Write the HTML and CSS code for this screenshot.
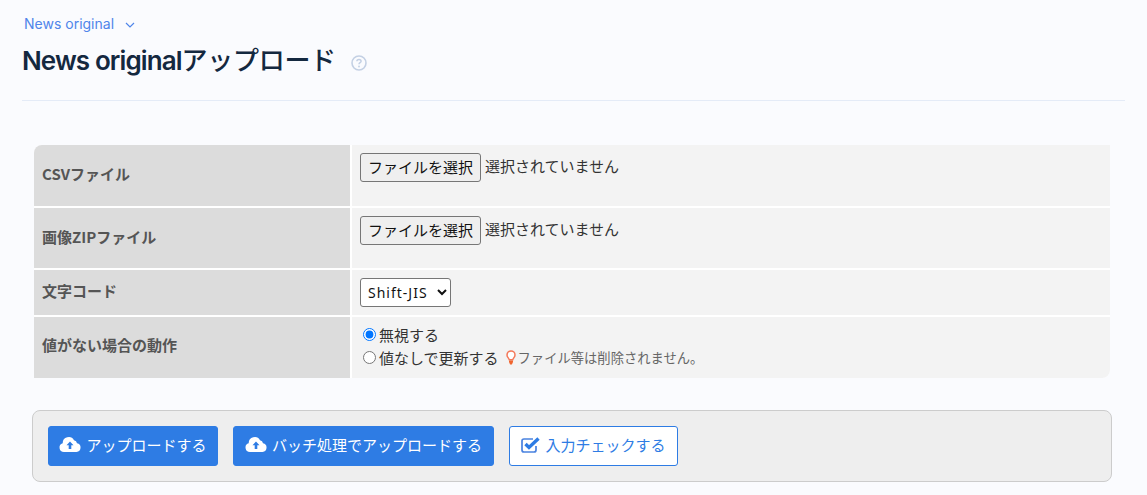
FILE: index.html
```html
<!DOCTYPE html>
<html lang="ja">
<head>
<meta charset="utf-8">
<title>News originalアップロード</title>
<link rel="stylesheet" href="styles.css">
</head>
<body>
<header class="page-head">
  <a class="crumb" href="#">News original
    <svg class="crumb-caret" width="10" height="6" viewBox="0 0 10 6"><path d="M1 1l4 4 4-4" fill="none" stroke="currentColor" stroke-width="1.2"/></svg>
  </a>
  <div class="title-row">
    <h1 class="title">News original<span class="title-kana">アップロード</span></h1>
    <svg class="help" width="16" height="16" viewBox="0 0 16 16"><circle cx="8" cy="8" r="7" fill="none" stroke="#c3d0e4" stroke-width="1.6"/><path d="M5.900 6.300c0-1.200 1-1.900 2.100-1.900s2.100.7 2.100 1.800c0 1.500-2.100 1.500-2.100 3" fill="none" stroke="#c3d0e4" stroke-width="1.5"/><circle cx="8" cy="11.500" r=".9" fill="#c3d0e4"/></svg>
  </div>
</header>

<section class="form-table">
  <div class="th th-file">CSVファイル</div>
  <div class="td td-file"><button class="file-btn" type="button">ファイルを選択</button><span class="file-none">選択されていません</span></div>
  <div class="th th-file">画像ZIPファイル</div>
  <div class="td td-file"><button class="file-btn" type="button">ファイルを選択</button><span class="file-none">選択されていません</span></div>
  <div class="th th-code">文字コード</div>
  <div class="td"><select class="encoding"><option>Shift-JIS</option><option>UTF-8</option></select></div>
  <div class="th th-radio">値がない場合の動作</div>
  <div class="td td-radio">
    <label class="radio-line"><input class="radio" type="radio" name="empty" checked>無視する</label>
    <div class="radio-line"><label class="radio-label"><input class="radio" type="radio" name="empty">値なしで更新する</label>
      <span class="note"><svg class="bulb" width="10" height="15" viewBox="0 0 10 15"><path d="M3.300 9.800C2.800 8 1 7.200 1 4.900a4 4 0 0 1 8 0C9 7.200 7.200 8 6.700 9.800z" fill="#fff" stroke="#f4795a" stroke-width="1.500"/><path d="M3 10.500h4v1.600L5.900 14.500H4.100L3 12.100z" fill="#f0652f"/></svg>ファイル等は削除されません。</span>
    </div>
  </div>
</section>

<section class="actions">
  <button class="btn btn-primary btn-upload" type="button"><svg class="cloud" width="22" height="16" viewBox="0 0 22 16"><path d="M5 16a4.500 4.500 0 0 1-1.300-8.800A6 6 0 0 1 15 4.300a3.600 3.600 0 0 1 3 3A4.400 4.400 0 0 1 17.500 16z" fill="#fff"/><path d="M11 5.500l3.500 3.700h-2.200V13H9.700V9.200H7.500z" fill="#2e7ce4"/></svg>アップロードする</button>
  <button class="btn btn-primary btn-batch" type="button"><svg class="cloud" width="22" height="16" viewBox="0 0 22 16"><path d="M5 16a4.500 4.500 0 0 1-1.300-8.800A6 6 0 0 1 15 4.300a3.600 3.600 0 0 1 3 3A4.400 4.400 0 0 1 17.500 16z" fill="#fff"/><path d="M11 5.500l3.500 3.700h-2.200V13H9.700V9.200H7.500z" fill="#2e7ce4"/></svg>バッチ処理でアップロードする</button>
  <button class="btn btn-outline btn-check" type="button"><svg class="check" width="20" height="17" viewBox="0 0 20 17"><path d="M15 10v4a2 2 0 0 1-2 2H3a2 2 0 0 1-2-2V5a2 2 0 0 1 2-2h9" fill="none" stroke="#4a82e0" stroke-width="1.700"/><path d="M4.500 8L8 11.500 17.500 2.500" fill="none" stroke="#2e7ce4" stroke-width="3.400"/></svg>入力チェックする</button>
</section>
</body>
</html>
```

FILE: styles.css
```css
* { box-sizing: border-box; }
html, body { height: 100%; }
body {
  margin: 0;
  padding: 0 22px;
  background: #fafbfe;
  font-family: "Noto Sans CJK JP", "Noto Sans", sans-serif;
  font-size: 15px;
  color: #333;
  overflow: hidden;
}
.page-head {
  height: 101px;
  border-bottom: 1px solid #e4ebf7;
  padding-top: 12px;
}
.crumb {
  display: inline-flex;
  align-items: center;
  gap: 11px;
  height: 20px;
  margin-left: 2px;
  font-family: Inter, "Noto Sans CJK JP", sans-serif;
  font-size: 14px;
  color: #4f85ea;
  text-decoration: none;
}
.crumb-caret { margin-top: 2px; }
.title-row {
  display: flex;
  align-items: center;
  gap: 15px;
  margin-top: 7px;
  height: 40px;
}
.title {
  margin: 0;
  font-family: Inter, "Noto Sans CJK JP", sans-serif;
  font-size: 26px;
  font-weight: 600;
  letter-spacing: -0.9px;
  line-height: 40px;
  color: #14283f;
}
.title-kana {
  font-weight: 500;
  letter-spacing: -0.3px;
}
.help { margin-top: 4px; }
.form-table {
  display: grid;
  grid-template-columns: 316px 758px;
  grid-template-rows: 61px 60px 45px 61px;
  gap: 2px;
  width: 1076px;
  margin: 44px 0 0 12px;
  border-radius: 8px 0 8px 0;
  overflow: hidden;
  background: #fff;
}
.th {
  display: flex;
  align-items: center;
  padding: 0 8px;
  background: #dcdcdc;
  font-size: 15px;
  font-weight: 700;
  color: #555;
}
.th-file { padding-bottom: 4px; }
.th-code { padding-bottom: 5px; }
.th-radio { padding-bottom: 6px; }
.td {
  padding: 8px;
  background: #f3f3f3;
}
.td-file {
  display: flex;
  align-items: flex-start;
}
.file-btn {
  height: 29px;
  width: 121px;
  padding: 0 0 3px;
  border: 1px solid #767676;
  border-radius: 3px;
  background: #efefef;
  font: 15px "Noto Sans CJK JP", sans-serif;
  color: #111;
}
.file-none {
  margin-left: 4px;
  font-size: 15px;
  line-height: 26px;
  color: #333;
}
.encoding {
  width: 91px;
  height: 29px;
  border: 1px solid #767676;
  border-radius: 3px;
  background: #fff;
  font: 14px "Noto Sans", sans-serif;
  letter-spacing: 1px;
  color: #111;
  padding-left: 3px;
}
.td-radio { padding: 6px 11px; }
.radio-line {
  display: flex;
  align-items: center;
  height: 23px;
  white-space: nowrap;
}
.radio-label { display: flex; align-items: center; }
.radio {
  margin: 0 3px 0 0;
  width: 13px;
  height: 13px;
}
.note {
  display: inline-flex;
  align-items: center;
  margin-left: 7px;
  font-size: 13.3px;
  color: #666;
}
.bulb { margin-right: 2px; }
.actions {
  display: flex;
  gap: 15px;
  width: 1080px;
  height: 72px;
  margin: 32px 0 0 10px;
  padding: 15px;
  background: #eee;
  border: 1px solid #ccc;
  border-radius: 8px;
}
.btn {
  display: inline-flex;
  align-items: center;
  justify-content: center;
  height: 40px;
  padding: 0 0 4px;
  border-radius: 3px;
  font: 15px "Noto Sans CJK JP", sans-serif;
}
.btn-upload { width: 170px; }
.btn-batch { width: 261px; }
.btn-check { width: 169px; }
.btn-primary {
  border: 1px solid #2e7ce4;
  background: #2e7ce4;
  color: #fff;
}
.btn-outline {
  border: 1px solid #2e7ce4;
  background: #fff;
  color: #2e7ce4;
}
.cloud { margin-right: 5px; }
.check { margin-right: 4px; }
```
